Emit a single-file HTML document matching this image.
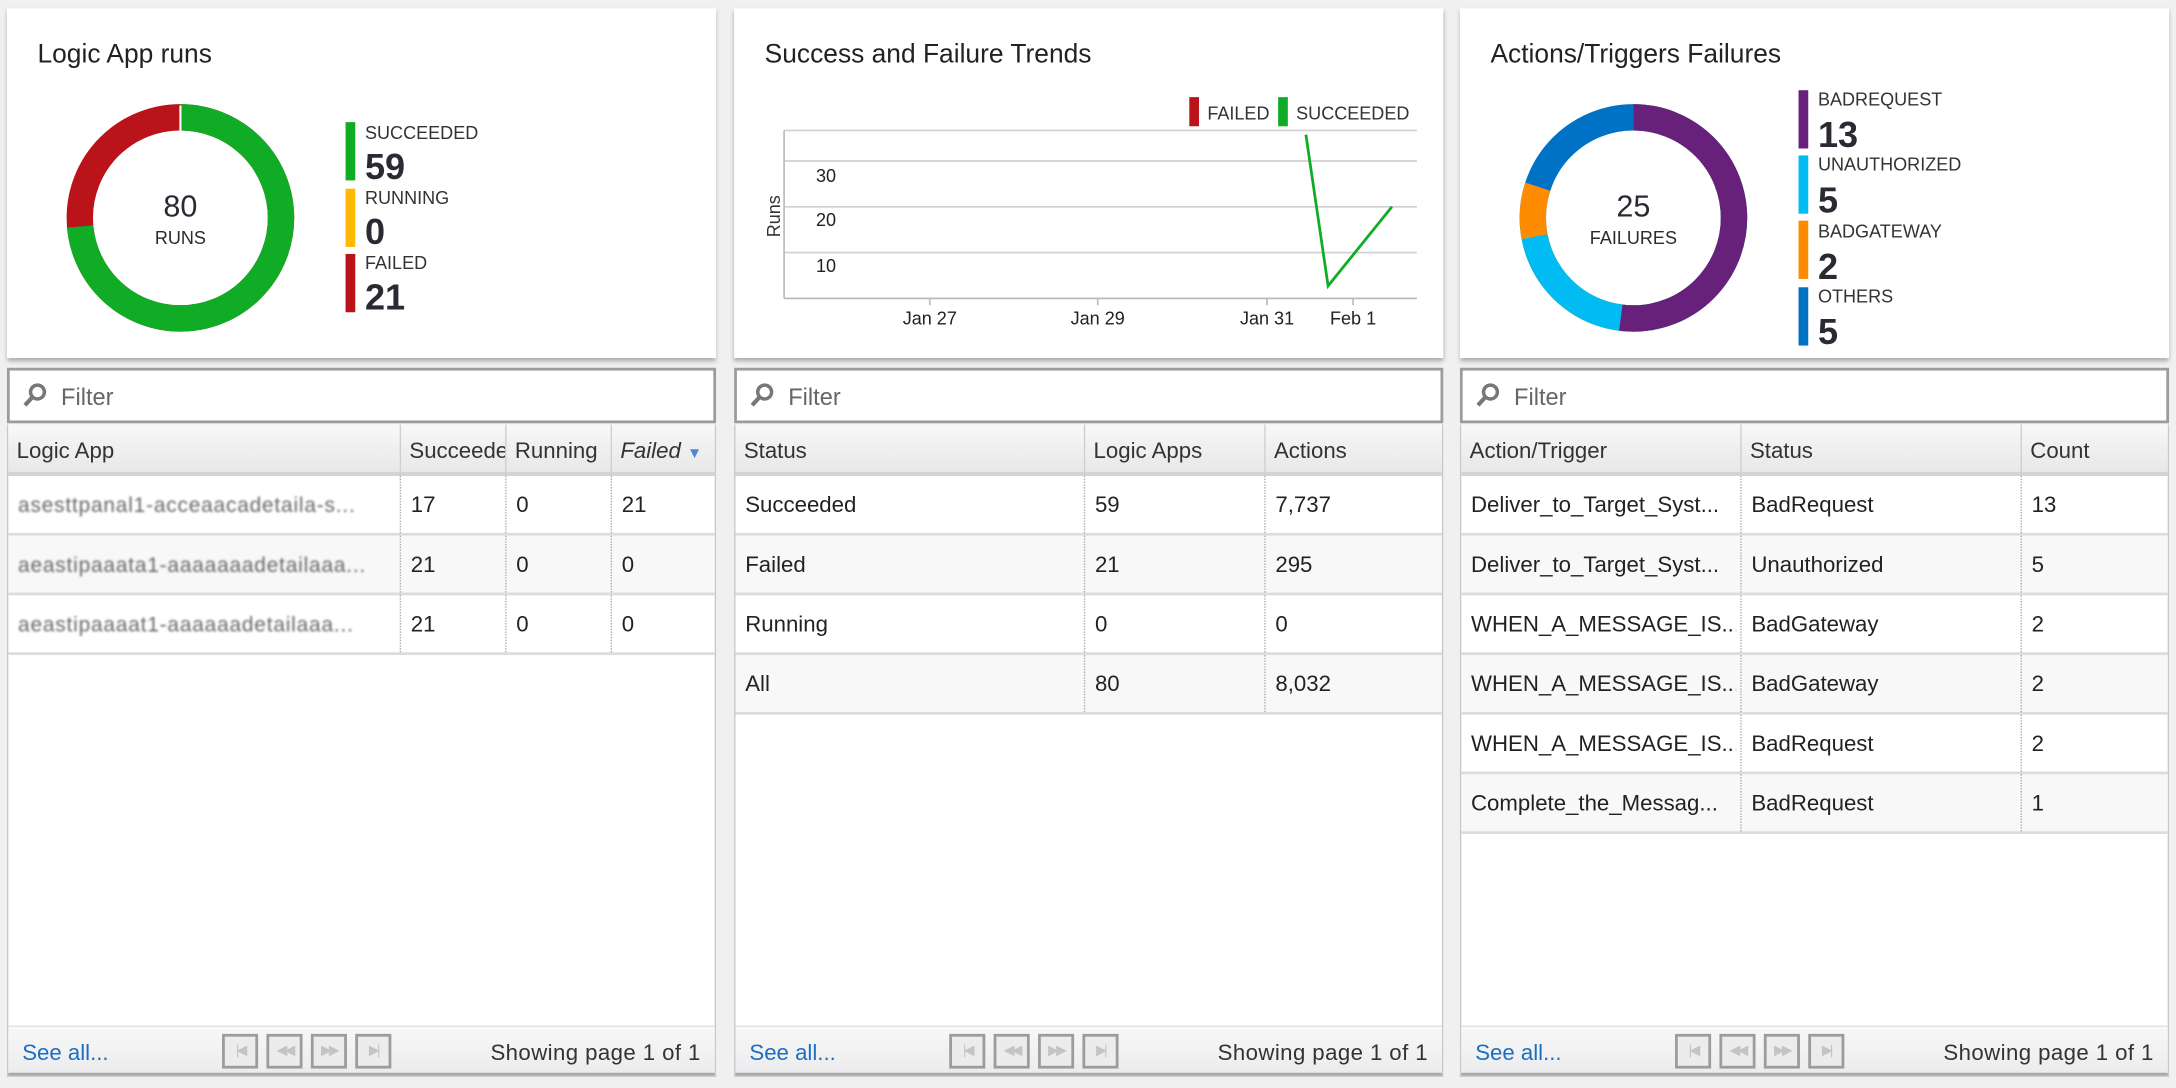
<!DOCTYPE html>
<html><head><meta charset="utf-8"><style>
*{box-sizing:border-box;margin:0;padding:0}
html,body{width:2176px;height:1088px;overflow:hidden;background:#f0f0f0}
#w{position:absolute;left:0;top:0;width:1568px;height:784px;transform:scale(1.38776);transform-origin:0 0;font-family:"Segoe UI","Liberation Sans",sans-serif;color:#222}
.card{position:absolute;top:6px;width:511px;height:252px;background:#fff;box-shadow:0 2px 3px rgba(0,0,0,.3)}
.title{position:absolute;left:22px;top:23px;font-size:19px;color:#222}
.ab{position:absolute}
.filter{position:absolute;top:265px;width:511px;height:40px;border:2px solid #9c9c9c;background:#fff;font-size:17px;color:#666}
.filter span{position:absolute;left:37px;top:10px}
.grid{position:absolute;top:306px;width:511px;height:470px;background:#fff;border:1px solid #c8c8c8;border-top:none}
.hdr{position:absolute;left:0;top:0;right:0;height:37px;background:linear-gradient(#f9f9f9,#f1f1f1 40%,#e8e8ea);border-bottom:3px solid #d4d4d4}
.hc{position:absolute;top:0;height:37px;line-height:40px;padding-left:6px;font-size:16px;color:#333;border-left:1px solid #cfcfcf;white-space:nowrap;overflow:hidden}
.row{position:absolute;left:0;right:0;height:43px;border-bottom:2px solid #dcdcdc}
.row.alt{background:#f8f8f8}
.c{position:absolute;top:0;height:41px;line-height:43px;padding-left:7px;font-size:16px;white-space:nowrap;overflow:hidden}
.c.d{border-left:1px dotted #aaa}
.foot{position:absolute;left:0;right:0;bottom:0;height:36px;background:linear-gradient(#f8f8f8,#ececee);border-top:1px solid #e0e0e0;border-bottom:2px solid #a8a8a8}
.see{position:absolute;left:10px;top:11px;font-size:16px;color:#1a6fc4}
.pg{position:absolute;top:5px;width:26px;height:25px;border:2px solid #9c9c9c;background:#ececec;color:#c4c4c4;font-size:10px;text-align:center;line-height:21px;letter-spacing:-2px}
.show{position:absolute;right:10px;top:11px;font-size:16px;color:#333;letter-spacing:0.3px}
.lg{position:absolute;font-size:13px;color:#333}
.big{position:absolute;font-size:26px;font-weight:bold;color:#2a2a33}
.bar{position:absolute;width:7px}
.blur{color:#666;filter:blur(0.7px);letter-spacing:0.6px;font-size:15px}
</style></head><body><div id="w">

<!-- panel 1 -->
<div class="card" style="left:5px">
 <div class="title">Logic App runs</div>
 <svg class="ab" style="left:0;top:0" width="511" height="252">
  <circle cx="125" cy="151" r="72.5" fill="none" stroke="#ba141a" stroke-width="19"/>
  <circle cx="125" cy="151" r="72.5" fill="none" stroke="#10ac26" stroke-width="19" stroke-dasharray="335.3 500" transform="rotate(-90 125 151)"/>
  <line x1="125" y1="70" x2="125" y2="90" stroke="#fff" stroke-width="1.5"/>
  <text x="125" y="150" text-anchor="middle" font-size="22" fill="#2a2a33" font-family="Liberation Sans">80</text>
  <text x="125" y="170" text-anchor="middle" font-size="13" fill="#2a2a33" font-family="Liberation Sans">RUNS</text>
 </svg>
 <div class="bar" style="left:244px;top:82px;height:42px;background:#10ac26"></div>
 <div class="bar" style="left:244px;top:130px;height:42px;background:#ffb900"></div>
 <div class="bar" style="left:244px;top:177px;height:42px;background:#ba141a"></div>
 <div class="lg" style="left:258px;top:82px">SUCCEEDED</div><div class="big" style="left:258px;top:99px">59</div>
 <div class="lg" style="left:258px;top:129px">RUNNING</div><div class="big" style="left:258px;top:146px">0</div>
 <div class="lg" style="left:258px;top:176px">FAILED</div><div class="big" style="left:258px;top:193px">21</div>
</div>
<div class="filter" style="left:5px"><svg class="ab" style="left:9px;top:9px" width="18" height="18"><circle cx="11" cy="6.5" r="5" fill="none" stroke="#777" stroke-width="2.5"/><line x1="7.5" y1="10" x2="2" y2="16" stroke="#777" stroke-width="3"/></svg><span>Filter</span></div>
<div class="grid" style="left:5px">
 <div class="hdr">
  <div class="hc" style="left:0;width:282px;border-left:none">Logic App</div>
  <div class="hc" style="left:282px;width:76px">Succeeded</div>
  <div class="hc" style="left:358px;width:76px">Running</div>
  <div class="hc" style="left:434px;width:77px;font-style:italic">Failed <span style="color:#4a8ad8;font-style:normal;font-size:11px">▼</span></div>
 </div>
 <div class="row" style="top:37px"><div class="c" style="left:0;width:282px"><span class="blur">asesttpanal1-acceaacadetaila-s...</span></div><div class="c d" style="left:282px">17</div><div class="c d" style="left:358px">0</div><div class="c d" style="left:434px">21</div></div>
 <div class="row alt" style="top:80px"><div class="c" style="left:0;width:282px"><span class="blur">aeastipaaata1-aaaaaaadetailaaa...</span></div><div class="c d" style="left:282px">21</div><div class="c d" style="left:358px">0</div><div class="c d" style="left:434px">0</div></div>
 <div class="row" style="top:123px"><div class="c" style="left:0;width:282px"><span class="blur">aeastipaaaat1-aaaaaadetailaaa...</span></div><div class="c d" style="left:282px">21</div><div class="c d" style="left:358px">0</div><div class="c d" style="left:434px">0</div></div>
 <div class="foot"><div class="see">See all...</div>
  <div class="pg" style="left:154px">|◀</div><div class="pg" style="left:186px">◀◀</div><div class="pg" style="left:218px">▶▶</div><div class="pg" style="left:250px">▶|</div>
  <div class="show">Showing page 1 of 1</div></div>
</div>

<!-- panel 2 -->
<div class="card" style="left:529px">
 <div class="title">Success and Failure Trends</div>
 <svg class="ab" style="left:0;top:0" width="511" height="252" font-family="Liberation Sans">
  <rect x="328" y="64" width="7" height="21" fill="#ba141a"/><text x="341" y="80" font-size="13" fill="#333">FAILED</text>
  <rect x="392" y="64" width="7" height="21" fill="#10ac26"/><text x="405" y="80" font-size="13" fill="#333">SUCCEEDED</text>
  <g stroke="#d0d0d0" stroke-width="1.2"><line x1="36" y1="88" x2="492" y2="88"/><line x1="36" y1="110" x2="492" y2="110"/><line x1="36" y1="143" x2="492" y2="143"/><line x1="36" y1="176" x2="492" y2="176"/></g>
  <g stroke="#bbb" stroke-width="1.2"><line x1="36" y1="88" x2="36" y2="209"/><line x1="36" y1="209" x2="492" y2="209"/>
   <line x1="141" y1="209" x2="141" y2="214"/><line x1="262" y1="209" x2="262" y2="214"/><line x1="384" y1="209" x2="384" y2="214"/><line x1="446" y1="209" x2="446" y2="214"/></g>
  <g font-size="13" fill="#222"><text x="59" y="125">30</text><text x="59" y="157">20</text><text x="59" y="190">10</text>
   <text x="141" y="228" text-anchor="middle">Jan 27</text><text x="262" y="228" text-anchor="middle">Jan 29</text><text x="384" y="228" text-anchor="middle">Jan 31</text><text x="446" y="228" text-anchor="middle">Feb 1</text></g>
  <text x="0" y="0" font-size="13" fill="#333" transform="translate(33,165) rotate(-90)">Runs</text>
  <polyline points="412,91 428,200 474,143" fill="none" stroke="#10ac26" stroke-width="2"/>
 </svg>
</div>
<div class="filter" style="left:529px"><svg class="ab" style="left:9px;top:9px" width="18" height="18"><circle cx="11" cy="6.5" r="5" fill="none" stroke="#777" stroke-width="2.5"/><line x1="7.5" y1="10" x2="2" y2="16" stroke="#777" stroke-width="3"/></svg><span>Filter</span></div>
<div class="grid" style="left:529px">
 <div class="hdr">
  <div class="hc" style="left:0;width:251px;border-left:none">Status</div>
  <div class="hc" style="left:251px;width:130px">Logic Apps</div>
  <div class="hc" style="left:381px;width:130px">Actions</div>
 </div>
 <div class="row" style="top:37px"><div class="c" style="left:0">Succeeded</div><div class="c d" style="left:251px;width:130px">59</div><div class="c d" style="left:381px">7,737</div></div>
 <div class="row alt" style="top:80px"><div class="c" style="left:0">Failed</div><div class="c d" style="left:251px;width:130px">21</div><div class="c d" style="left:381px">295</div></div>
 <div class="row" style="top:123px"><div class="c" style="left:0">Running</div><div class="c d" style="left:251px;width:130px">0</div><div class="c d" style="left:381px">0</div></div>
 <div class="row alt" style="top:166px"><div class="c" style="left:0">All</div><div class="c d" style="left:251px;width:130px">80</div><div class="c d" style="left:381px">8,032</div></div>
 <div class="foot"><div class="see">See all...</div>
  <div class="pg" style="left:154px">|◀</div><div class="pg" style="left:186px">◀◀</div><div class="pg" style="left:218px">▶▶</div><div class="pg" style="left:250px">▶|</div>
  <div class="show">Showing page 1 of 1</div></div>
</div>

<!-- panel 3 -->
<div class="card" style="left:1052px">
 <div class="title">Actions/Triggers Failures</div>
 <svg class="ab" style="left:0;top:0" width="511" height="252" font-family="Liberation Sans">
  <g fill="none" stroke-width="19" transform="rotate(-90 125 151)">
   <circle cx="125" cy="151" r="72.5" stroke="#0072c6"/>
   <circle cx="125" cy="151" r="72.5" stroke="#ff8c00" stroke-dasharray="364.4 500"/>
   <circle cx="125" cy="151" r="72.5" stroke="#00bcf2" stroke-dasharray="327.9 500"/>
   <circle cx="125" cy="151" r="72.5" stroke="#68217a" stroke-dasharray="236.8 500"/>
  </g>
  <text x="125" y="150" text-anchor="middle" font-size="22" fill="#2a2a33">25</text>
  <text x="125" y="170" text-anchor="middle" font-size="13" fill="#2a2a33">FAILURES</text>
 </svg>
 <div class="bar" style="left:244px;top:59px;height:42px;background:#68217a"></div>
 <div class="bar" style="left:244px;top:106px;height:42px;background:#00bcf2"></div>
 <div class="bar" style="left:244px;top:153px;height:42px;background:#ff8c00"></div>
 <div class="bar" style="left:244px;top:201px;height:42px;background:#0072c6"></div>
 <div class="lg" style="left:258px;top:58px">BADREQUEST</div><div class="big" style="left:258px;top:76px">13</div>
 <div class="lg" style="left:258px;top:105px">UNAUTHORIZED</div><div class="big" style="left:258px;top:123px">5</div>
 <div class="lg" style="left:258px;top:153px">BADGATEWAY</div><div class="big" style="left:258px;top:171px">2</div>
 <div class="lg" style="left:258px;top:200px">OTHERS</div><div class="big" style="left:258px;top:218px">5</div>
</div>
<div class="filter" style="left:1052px"><svg class="ab" style="left:9px;top:9px" width="18" height="18"><circle cx="11" cy="6.5" r="5" fill="none" stroke="#777" stroke-width="2.5"/><line x1="7.5" y1="10" x2="2" y2="16" stroke="#777" stroke-width="3"/></svg><span>Filter</span></div>
<div class="grid" style="left:1052px">
 <div class="hdr">
  <div class="hc" style="left:0;width:201px;border-left:none">Action/Trigger</div>
  <div class="hc" style="left:201px;width:202px">Status</div>
  <div class="hc" style="left:403px;width:108px">Count</div>
 </div>
 <div class="row" style="top:37px"><div class="c" style="left:0;width:198px">Deliver_to_Target_Syst...</div><div class="c d" style="left:201px;width:202px">BadRequest</div><div class="c d" style="left:403px">13</div></div>
 <div class="row alt" style="top:80px"><div class="c" style="left:0;width:198px">Deliver_to_Target_Syst...</div><div class="c d" style="left:201px;width:202px">Unauthorized</div><div class="c d" style="left:403px">5</div></div>
 <div class="row" style="top:123px"><div class="c" style="left:0;width:198px">WHEN_A_MESSAGE_IS...</div><div class="c d" style="left:201px;width:202px">BadGateway</div><div class="c d" style="left:403px">2</div></div>
 <div class="row alt" style="top:166px"><div class="c" style="left:0;width:198px">WHEN_A_MESSAGE_IS...</div><div class="c d" style="left:201px;width:202px">BadGateway</div><div class="c d" style="left:403px">2</div></div>
 <div class="row" style="top:209px"><div class="c" style="left:0;width:198px">WHEN_A_MESSAGE_IS...</div><div class="c d" style="left:201px;width:202px">BadRequest</div><div class="c d" style="left:403px">2</div></div>
 <div class="row alt" style="top:252px"><div class="c" style="left:0;width:198px">Complete_the_Messag...</div><div class="c d" style="left:201px;width:202px">BadRequest</div><div class="c d" style="left:403px">1</div></div>
 <div class="foot"><div class="see">See all...</div>
  <div class="pg" style="left:154px">|◀</div><div class="pg" style="left:186px">◀◀</div><div class="pg" style="left:218px">▶▶</div><div class="pg" style="left:250px">▶|</div>
  <div class="show">Showing page 1 of 1</div></div>
</div>

</div></body></html>
